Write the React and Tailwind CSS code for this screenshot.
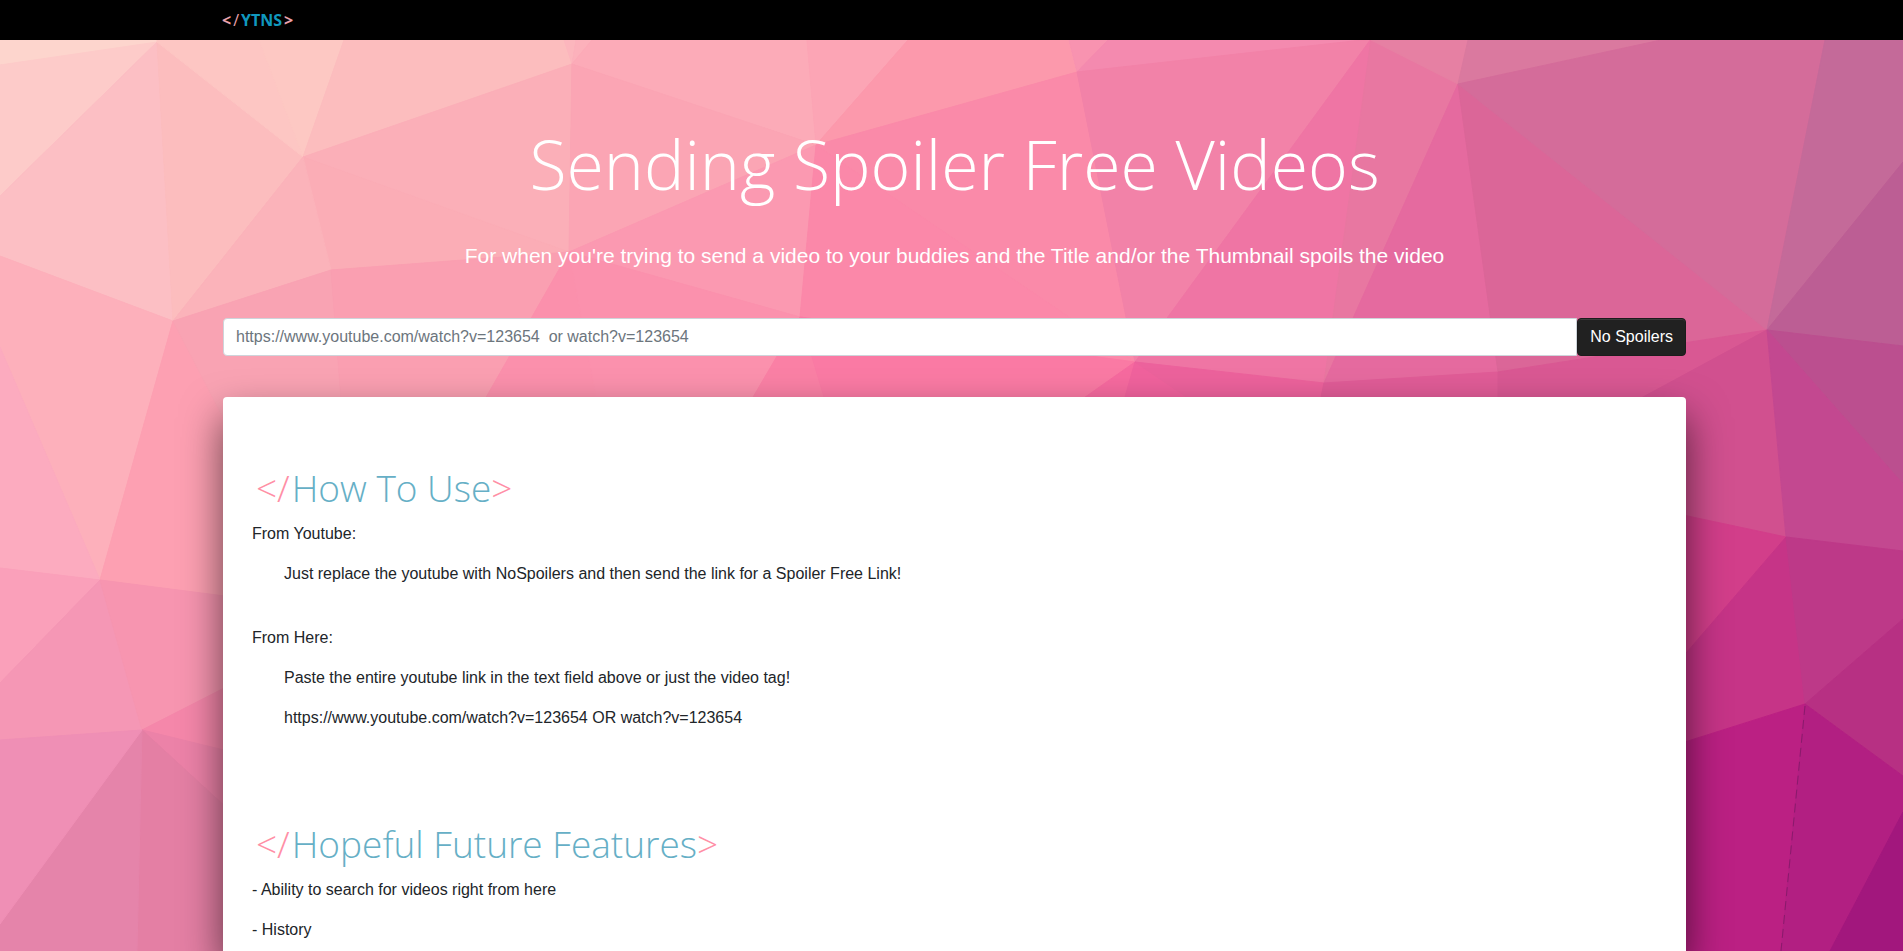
const facets = [
  ['0,40 157,40 157,43 0,65', '#fdd5cd'],
  ['0,65 157,42 0,196', '#fdcbc9'],
  ['0,196 157,42 173,321 0,256', '#fcbfc4'],
  ['157,42 303,157 173,321', '#fcbdbe'],
  ['157,40 259,40 303,157 157,42', '#fdc6c3'],
  ['259,40 344,40 303,157', '#fdc8c3'],
  ['344,40 564,40 572,64 303,157', '#fcbdbe'],
  ['564,40 576,40 572,64', '#fcb6bd'],
  ['576,40 592,40 572,64', '#fcb1bb'],
  ['303,157 572,64 569,252', '#fbafb8'],
  ['303,157 569,252 331,270', '#fbadb6'],
  ['303,157 331,270 173,321', '#fbb3ba'],
  ['0,256 173,321 100,580 0,347', '#fdb0bb'],
  ['0,347 100,580 0,568', '#fcabbf'],
  ['173,321 240,450 240,598 100,580', '#fda0b2'],
  ['173,321 331,270 345,450 240,450', '#f9a3b3'],
  ['331,270 569,252 456,450 345,450', '#fa9fb1'],
  ['592,40 807,40 816,145 572,64', '#fcabb8'],
  ['572,64 816,145 569,252', '#fba5b4'],
  ['807,40 908,40 816,145', '#fca5b5'],
  ['908,40 1069,40 1077,72 816,145', '#fc99ac'],
  ['1069,40 1108,40 1077,72', '#f893b0'],
  ['1108,40 1371,40 1077,72', '#f48aaf'],
  ['569,252 816,145 800,317', '#fb99b1'],
  ['569,252 606,450 456,450', '#fb90ac'],
  ['569,252 800,317 722,450 606,450', '#fb91ad'],
  ['816,145 1077,72 1135,362', '#fa8aa9'],
  ['816,145 1135,362 800,317', '#fb88a9'],
  ['800,317 840,450 722,450', '#fa80a5'],
  ['800,317 1135,362 1010,450 840,450', '#fa7aa4'],
  ['1135,362 1110,450 1010,450', '#f66a9f'],
  ['1077,72 1371,39 1135,362', '#f282a8'],
  ['1371,39 1324,383 1135,362', '#ef75a4'],
  ['1371,39 1458,84 1324,383', '#e877a1'],
  ['1371,40 1468,40 1458,84', '#e680a3'],
  ['1468,40 1661,40 1458,84', '#da799f'],
  ['1458,84 1498,372 1324,383', '#e56a9f'],
  ['1135,362 1265,450 1110,450', '#f0629d'],
  ['1135,362 1324,383 1310,450 1265,450', '#ec629c'],
  ['1324,383 1498,372 1498,450 1310,450', '#e05c97'],
  ['1458,84 1767,330 1498,372', '#db6698'],
  ['1458,84 1661,40 1825,40 1767,330', '#d46c9a'],
  ['1825,40 1903,40 1903,162 1767,330', '#c46a99'],
  ['1903,162 1903,346 1767,330', '#bc5e94'],
  ['1767,330 1903,346 1903,484', '#bb4f8f'],
  ['1767,330 1498,372 1498,450 1545,450', '#d95893'],
  ['1767,330 1786,537 1650,508 1545,450', '#d1508f'],
  ['1767,330 1903,484 1903,551 1786,537', '#c34890'],
  ['1650,508 1786,537 1650,695', '#d23e8a'],
  ['1786,537 1805,704 1650,753 1650,695', '#c63487'],
  ['1786,537 1903,551 1903,619 1805,704', '#bd3988'],
  ['1903,619 1903,776 1805,704', '#b73083'],
  ['1650,753 1805,704 1781,951 1650,951', '#bb2083'],
  ['1805,704 1903,776 1903,812 1830,951 1781,951', '#b21f82'],
  ['1903,812 1903,951 1830,951', '#a2177d'],
  ['0,568 100,580 0,683', '#faa0ba'],
  ['100,580 142,730 0,740 0,683', '#f597b5'],
  ['100,580 240,598 240,680 142,730', '#f795b0'],
  ['142,730 240,680 240,754', '#f587aa'],
  ['142,730 240,754 240,820', '#ec82a8'],
  ['142,730 240,820 240,951 137,951', '#e47fa4'],
  ['142,730 137,951 0,951 0,924', '#e584aa'],
  ['142,730 0,924 0,740', '#ef8fb5'],
];

function Backdrop() {
  return (
    <svg
      className="absolute inset-0 -z-10 h-full w-full"
      viewBox="0 40 1903 911"
      preserveAspectRatio="none"
      aria-hidden="true"
    >
      <rect x="0" y="40" width="1903" height="911" fill="#e87aa3" />
      {facets.map(([points, color]) => (
        <polygon key={points} points={points} fill={color} stroke={color} strokeWidth="1" strokeLinejoin="round" />
      ))}
      <path d="M1805 706L1781 951" stroke="#8a1a6c" strokeWidth="1" strokeDasharray="9 5" fill="none" />
    </svg>
  );
}

function SectionTitle({ children }) {
  return (
    <h2 className="mb-[10px] pl-1 font-['Open_Sans',sans-serif] text-[37px]/[48px] font-light text-[#66afc6]">
      <span className="mr-0.5 text-[#ff8fa6]">&lt;/</span>
      {children}
      <span className="text-[#ff8fa6]">&gt;</span>
    </h2>
  );
}

export default function App() {
  return (
    <div className="flex min-h-screen flex-col font-['Liberation_Sans',Arial,sans-serif] text-base text-[#212529]">
      <nav className="flex h-10 items-center bg-black pr-[217px] pl-[222px]">
        <a href="#" className="flex gap-0.5 font-['Open_Sans',sans-serif] text-base font-bold text-[#1098be]">
          <span className="text-[#eba2ac]">&lt;</span>
          <span className="font-normal text-[#eba2ac]">/</span>
          <span>YTNS</span>
          <span className="text-[#eba2ac]">&gt;</span>
        </a>
      </nav>

      <main className="relative isolate flex flex-1 flex-col pr-[217px] pl-[223px]">
        <Backdrop />
        <header className="pt-20 text-center text-white">
          <h1 className="font-['Open_Sans',sans-serif] text-[68px]/[88px] font-light">
            Sending Spoiler Free Videos
          </h1>
          <p className="mt-8 text-[21px]/[32px]">
            For when you're trying to send a video to your buddies and the Title and/or the Thumbnail spoils the video
          </p>
        </header>

        <form className="mt-[46px] flex" onSubmit={(event) => event.preventDefault()}>
          <input
            type="text"
            aria-label="YouTube link"
            placeholder="https://www.youtube.com/watch?v=123654  or watch?v=123654"
            className="h-[38px] min-w-0 flex-1 rounded-l border border-[#ced4da] bg-white px-3 placeholder:text-[#6c757d] placeholder:opacity-100"
          />
          <button
            type="submit"
            className="h-[38px] rounded border border-[#1c1c1c] bg-[#212121] px-3 text-white shadow-[inset_0_1px_0_#3a3a3a]"
          >
            No Spoilers
          </button>
        </form>

        <article className="mt-[41px] flex-1 rounded-t bg-white px-[29px] pt-[67px] shadow-[0_20px_40px_rgba(0,0,0,0.6)]">
          <section>
            <SectionTitle>How To Use</SectionTitle>
            <p>From Youtube:</p>
            <p className="mt-4 pl-8">Just replace the youtube with NoSpoilers and then send the link for a Spoiler Free Link!</p>
            <p className="mt-10">From Here:</p>
            <p className="mt-4 pl-8">Paste the entire youtube link in the text field above or just the video tag!</p>
            <p className="mt-4 pl-8">https://www.youtube.com/watch?v=123654 OR watch?v=123654</p>
          </section>
          <section className="mt-[90px]">
            <SectionTitle>Hopeful Future Features</SectionTitle>
            <p>- Ability to search for videos right from here</p>
            <p className="mt-4">- History</p>
          </section>
        </article>
      </main>
    </div>
  );
}
